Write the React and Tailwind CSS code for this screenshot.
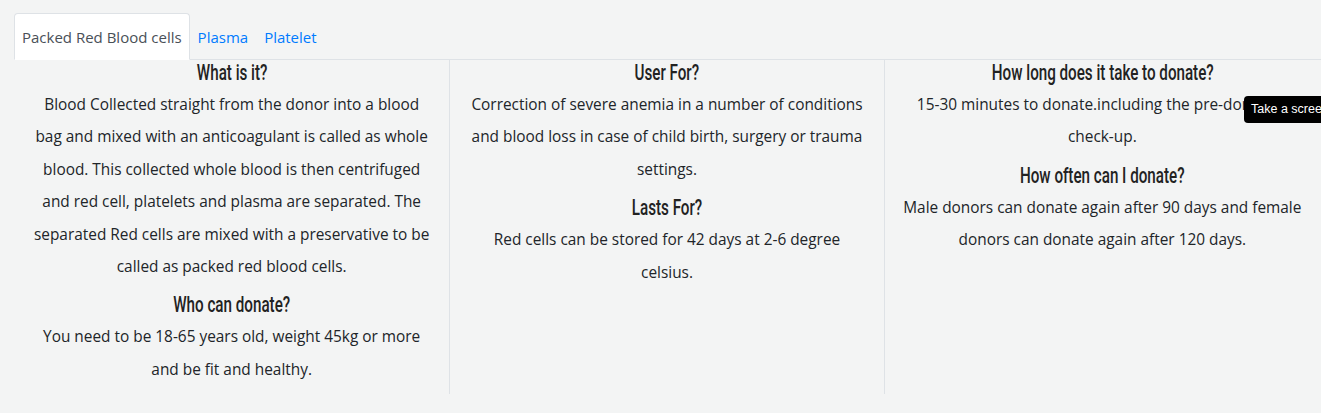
import React, { useState } from 'react'

const tabs = ['Packed Red Blood cells', 'Plasma', 'Platelet']

const columns = [
    [
        {
            title: 'What is it?',
            text: 'Blood Collected straight from the donor into a blood bag and mixed with an anticoagulant is called as whole blood. This collected whole blood is then centrifuged and red cell, platelets and plasma are separated. The separated Red cells are mixed with a preservative to be called as packed red blood cells.',
        },
        {
            title: 'Who can donate?',
            text: 'You need to be 18-65 years old, weight 45kg or more and be fit and healthy.',
        },
    ],
    [
        {
            title: 'User For?',
            text: 'Correction of severe anemia in a number of conditions and blood loss in case of child birth, surgery or trauma settings.',
        },
        {
            title: 'Lasts For?',
            text: 'Red cells can be stored for 42 days at 2-6 degree celsius.',
        },
    ],
    [
        {
            title: 'How long does it take to donate?',
            text: '15-30 minutes to donate.including the pre-donation check-up.',
        },
        {
            title: 'How often can I donate?',
            text: 'Male donors can donate again after 90 days and female donors can donate again after 120 days.',
        },
    ],
]

const App = () => {

    const [active, setActive] = useState(0)

    return (
        <div className="relative min-h-[413px] bg-[#f3f4f4] pt-[13px] pl-[14px] text-[#212529] font-['Segoe_UI','Open_Sans',sans-serif] overflow-hidden">
            {/* Tabs */}
            <div className="flex border-b border-[#dee2e6]">
                {tabs.map((t, i) => (
                    <button
                        key={t}
                        onClick={() => setActive(i)}
                        className={
                            i === active
                                ? "h-[47px] -mb-px px-[7px] pt-[1px] text-[15px] text-[#495057] bg-white border border-[#dee2e6] border-b-white rounded-t-[4px]"
                                : "h-[47px] -mb-px px-[7px] pt-[1px] text-[15px] text-[#007bff] border border-transparent"
                        }
                    >
                        {t}
                    </button>
                ))}
            </div>

            {/* Content */}
            <div className="grid grid-cols-3 w-[1306px]">
                {columns.map((col, ci) => (
                    <div
                        key={ci}
                        className={
                            ci === 1
                                ? "border-x border-[#dee2e6] px-[16px] pb-[8px] text-center"
                                : "px-[16px] pb-[8px] text-center"
                        }
                    >
                        {col.map((s, si) => (
                            <div key={si} className={si > 0 ? "mt-[9px]" : ""}>
                                <h3 className="mb-[3px] text-[22px] leading-[26px] font-medium text-[#222] font-['Roboto',sans-serif] whitespace-nowrap">
                                    <span className="inline-block scale-x-[0.69] origin-center">{s.title}</span>
                                </h3>
                                <p className="text-[15.4px] leading-[32.4px]">{s.text}</p>
                            </div>
                        ))}
                    </div>
                ))}
            </div>

            {/* Overlay tooltip */}
            <div className="absolute left-[1244px] top-[96px] h-[27px] pl-[7px] pr-[6px] flex items-center rounded-[4px] bg-black text-white text-[12.5px] whitespace-nowrap font-['Liberation_Sans',sans-serif]">
                Take a screenshot
            </div>
        </div>
    )
}

export default App
